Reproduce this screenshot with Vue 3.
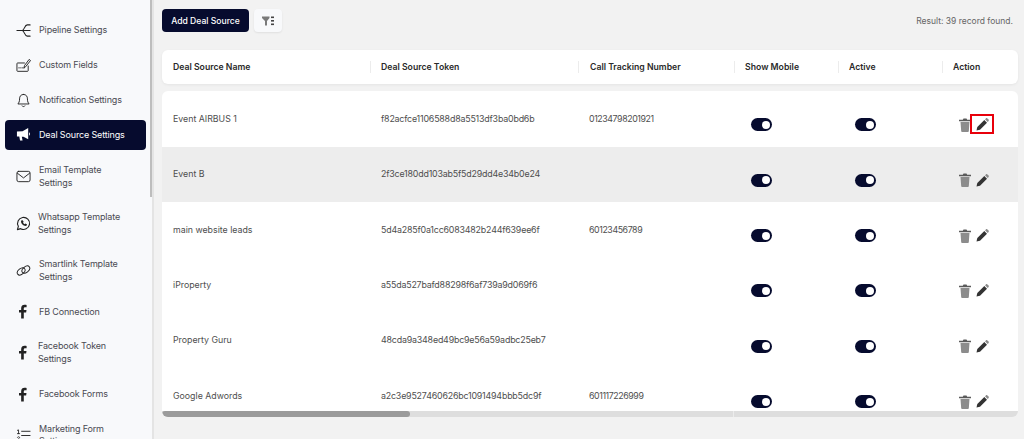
<script setup>
const menu = [
  { id: 'pipe', label: ['Pipeline Settings'] },
  { id: 'card', label: ['Custom Fields'] },
  { id: 'bell', label: ['Notification Settings'] },
  { id: 'mega', label: ['Deal Source Settings'], active: true },
  { id: 'mail', label: ['Email Template', 'Settings'] },
  { id: 'wa', label: ['Whatsapp Template', 'Settings'] },
  { id: 'link', label: ['Smartlink Template', 'Settings'] },
  { id: 'fb', label: ['FB Connection'] },
  { id: 'fb', label: ['Facebook Token', 'Settings'] },
  { id: 'fb', label: ['Facebook Forms'] },
  { id: 'list', label: ['Marketing Form', 'Settings'] }
]
const cols = ['Deal Source Name', 'Deal Source Token', 'Call Tracking Number', 'Show Mobile', 'Active', 'Action']
const rows = [
  { name: 'Event AIRBUS 1', token: 'f82acfce1106588d8a5513df3ba0bd6b', phone: '01234798201921', marked: true },
  { name: 'Event B', token: '2f3ce180dd103ab5f5d29dd4e34b0e24', phone: '', shaded: true },
  { name: 'main website leads', token: '5d4a285f0a1cc6083482b244f639ee6f', phone: '60123456789' },
  { name: 'iProperty', token: 'a55da527bafd88298f6af739a9d069f6', phone: '' },
  { name: 'Property Guru', token: '48cda9a348ed49bc9e56a59adbc25eb7', phone: '' },
  { name: 'Google Adwords', token: 'a2c3e9527460626bc1091494bbb5dc9f', phone: '601117226999' }
]
</script>

<template>
  <div class="page">
    <aside class="side">
      <nav class="menu">
        <a v-for="(m, i) in menu" :key="i" class="item" :class="{ active: m.active, tall: m.label.length > 1 }">
          <svg class="ico" viewBox="0 0 16 16" fill="none" stroke="currentColor" stroke-width="1" stroke-linecap="round" stroke-linejoin="round">
            <template v-if="m.id === 'pipe'">
              <path stroke-width="1.200" d="M1 8h5.500M6.500 8c2.500 0 2.500-6 5.500-6h3M6.500 8h8.500M6.500 8c2.500 0 2.500 6 5.500 6h3" />
            </template>
            <template v-else-if="m.id === 'card'">
              <path d="M13 8.500v5c0 .4-.3.7-.7.7H1.700c-.4 0-.7-.3-.7-.7V6c0-.4.3-.7.700-.7H9" />
              <path d="M8.500 10.500l.6-2.500L14 1.500l1.500 1.200-5 6.300z" />
              <path d="M3 10.500h.5M5 10.500h.5M7 10.500h.5" />
            </template>
            <template v-else-if="m.id === 'bell'">
              <path d="M8 1.500c-3 0-4.200 2.200-4.200 4.800 0 3-.8 4.200-1.800 5.400h12c-1-1.200-1.800-2.400-1.800-5.400 0-2.600-1.200-4.800-4.200-4.800z" />
              <path d="M6.500 13.800c.4 1 2.600 1 3 0" />
            </template>
            <template v-else-if="m.id === 'mega'">
              <path fill="currentColor" stroke="none" d="M1 4.800l6-.3 6-3.500v12L8 10.300l-1.800 0 .8 4.200H4.300L3.500 10H1zM14 5.500c1.400.6 1.400 3.200 0 3.800z" />
            </template>
            <template v-else-if="m.id === 'mail'">
              <rect x="1" y="2.500" width="14" height="11" rx="1.800" />
              <path d="M1.500 4.500l6.500 5 6.500-5" />
            </template>
            <template v-else-if="m.id === 'wa'">
              <path stroke-width="1.200" d="M1.500 14.500l1-3.500a6.400 6.400 0 1 1 2.500 2.500z" />
              <path fill="currentColor" stroke="none" d="M5.500 4.800c-.9 2.900 2.600 6.400 5.700 5.700l.6-1.500-1.900-1-.7.800c-.8-.4-1.400-1-1.800-1.800l.8-.7-1-1.900z" />
            </template>
            <template v-else-if="m.id === 'link'">
              <ellipse cx="5.500" cy="9" rx="4.700" ry="3" transform="rotate(-38 5.500 9)" />
              <ellipse cx="10.500" cy="7" rx="4.700" ry="3" transform="rotate(-38 10.500 7)" />
            </template>
            <template v-else-if="m.id === 'fb'">
              <path fill="currentColor" stroke="none" d="M5.500 15.500V9H3.200V6.300h2.300V4.500C5.500 2 7 .8 9.100.8c1 0 1.900.1 2.200.2v2.400H9.800c-1.200 0-1.500.6-1.500 1.400v1.500h2.900L10.800 9H8.300v6.500z" />
            </template>
            <template v-else>
              <path d="M6 3.500h9M6 8h9M6 12.500h9" />
              <path d="M1.500 2.500L2.700 2v4M1.500 6h2.400M1.500 10c.3-1 2.300-1 2.300.2 0 1-2.300 1.800-2.300 3h2.400" stroke-width=".9" />
            </template>
          </svg>
          <span class="label" :class="{ shift: m.label[0].startsWith('Whatsapp') || m.label[0] === 'Facebook Token' }">
            <span v-for="l in m.label" :key="l" class="line">{{ l }}</span>
          </span>
        </a>
      </nav>
      <div class="side-thumb"></div>
    </aside>

    <main class="main">
      <div class="toolbar">
        <div class="tools">
          <button class="add">Add Deal Source</button>
          <button class="filter">
            <svg viewBox="0 0 12 10" width="12" height="10">
              <path fill="#7a7a7a" d="M0 .5h7.500v1.500L5 5v4.500H3V5L0 2z" />
              <rect x="9" y=".5" width="3" height="1.600" fill="#444" />
              <rect x="9" y="4" width="3" height="1.600" fill="#444" />
              <rect x="9" y="7.500" width="3" height="1.600" fill="#444" />
            </svg>
          </button>
        </div>
        <span class="result">Result: 39 record found.</span>
      </div>

      <div class="thead grid">
        <div v-for="(c, i) in cols" :key="c" class="th" :class="{ first: i === 0 }"><span>{{ c }}</span></div>
      </div>

      <div class="tbody">
        <div v-for="r in rows" :key="r.name" class="row grid" :class="{ shaded: r.shaded }">
          <div class="td name">{{ r.name }}</div>
          <div class="td token">{{ r.token }}</div>
          <div class="td phone">{{ r.phone }}</div>
          <div class="td ctl"><span class="toggle"></span></div>
          <div class="td ctl"><span class="toggle"></span></div>
          <div class="td act">
            <svg class="trash" viewBox="0 0 12 14" width="12" height="14">
              <path fill="#8c8c8c" d="M1.500 4h9l-.7 9.200c0 .5-.4.800-.9.800H3.100c-.5 0-.9-.3-.9-.8z" />
              <path fill="#5a5a5a" d="M0 1.800h3.800L4.500.6h3l.7 1.200H12v1.400H0z" />
            </svg>
            <span class="edit" :class="{ marked: r.marked }">
              <svg viewBox="0 0 13 13" width="13" height="13">
                <path fill="#333" d="M8.300 2L11 4.700 4 11.700l-3.500.8.800-3.500z" />
                <path fill="#8a8a8a" d="M9 1.300l.9-.9c.5-.4 1-.4 1.500 0l1.200 1.200c.4.500.4 1 0 1.500l-.9.900z" />
              </svg>
            </span>
          </div>
        </div>
      </div>

      <div class="hbar"><div class="hthumb"></div></div>
    </main>
  </div>
</template>

<style>
html, body { margin: 0; background: #f2f2f2; overflow: hidden; }
</style>

<style scoped>
.page {
  display: flex;
  width: 1024px;
  height: 439px;
  overflow: hidden;
  font-family: Inter, "Noto Sans", sans-serif;
  color: #4a4a4a;
  background: #f2f2f2;
}
.side {
  position: relative;
  flex: 0 0 152px;
  height: 439px;
  overflow: hidden;
  background: #f8f9fb;
  border-right: 2px solid #e4e4e4;
}
.side-thumb {
  position: absolute;
  top: 0;
  right: 0;
  width: 2px;
  height: 197px;
  background: #bdbdbd;
}
.menu {
  display: flex;
  flex-direction: column;
  gap: 5.3px;
  padding: 15px 6px 0 5px;
}
.item {
  display: flex;
  align-items: center;
  flex: none;
  height: 30px;
  padding-left: 11px;
  border-radius: 4px;
  color: #222;
  box-sizing: border-box;
}
.item.tall { height: 41.6px; }
.item.active {
  margin-top: -1px;
  margin-bottom: 1px;
  background: #060b2e;
  color: #fff;
}
.ico {
  flex: none;
  width: 15px;
  height: 15px;
}
.label {
  display: flex;
  flex-direction: column;
  margin-left: 8px;
  font-size: 9px;
  line-height: 12.5px;
  letter-spacing: -.15px;
  color: #4a4a52;
}
.label.shift { margin-left: 7px; }
.item.active .label { color: #fff; }
.line { white-space: nowrap; }

.main {
  flex: 1;
  min-width: 0;
  padding: 9px 6px 0 8px;
}
.toolbar {
  display: flex;
  align-items: center;
  justify-content: space-between;
  height: 23px;
  padding-right: 5px;
}
.tools {
  display: flex;
  align-items: center;
  gap: 5px;
}
button {
  font: inherit;
  border: 0;
  padding: 0;
}
.add {
  width: 87px;
  height: 23px;
  background: #060b2e;
  color: #fff;
  border-radius: 4px;
  font-size: 8.6px;
  font-weight: 500;
}
.filter {
  display: flex;
  align-items: center;
  justify-content: center;
  width: 28px;
  height: 23px;
  background: #f8f9fb;
  border-radius: 4px;
  box-shadow: 0 1px 2px rgba(0,0,0,.08);
}
.result {
  font-size: 8.5px;
  color: #666;
}
.grid {
  display: grid;
  grid-template-columns: 208px 208px 156px 104px 104px 76px;
}
.thead {
  margin-top: 18px;
  height: 34px;
  align-items: center;
  background: #fff;
  border-radius: 6px;
  box-shadow: 0 1px 3px rgba(0,0,0,.06);
}
.th {
  display: flex;
  align-items: center;
  height: 12px;
  padding-left: 10px;
  border-left: 1px solid #ececec;
  font-size: 8.7px;
  font-weight: 600;
  color: #2a2a2a;
  white-space: nowrap;
}
.th.first { border-left: 0; padding-left: 11px; }
.th:nth-child(3) { padding-left: 11px; }
.tbody {
  margin-top: 7px;
  height: 320px;
  overflow: hidden;
  background: #fff;
  border-radius: 6px 6px 0 0;
}
.row {
  height: 55.4px;
}
.row:first-child { height: 56px; }
.row.shaded { background: #ededed; }
.td {
  display: flex;
  align-items: center;
  padding-left: 11px;
  padding-bottom: 2px;
  font-size: 8.8px;
  color: #4e4e4e;
  white-space: nowrap;
}
.token { font-size: 8.9px; letter-spacing: -.2px; }
.phone { font-size: 8.8px; letter-spacing: -.4px; }
.ctl {
  padding: 11px 0 0 17px;
}
.toggle {
  position: relative;
  display: block;
  width: 21px;
  height: 13px;
  border-radius: 6.5px;
  background: #060b2e;
}
.toggle::after {
  content: "";
  position: absolute;
  top: 2.5px;
  right: 2px;
  width: 8px;
  height: 8px;
  border-radius: 50%;
  background: #fff;
}
.act {
  padding: 11px 0 0 17px;
  gap: 5px;
}
.edit {
  position: relative;
  display: flex;
}
.edit.marked::after {
  content: "";
  position: absolute;
  top: -4px;
  left: -6px;
  width: 20px;
  height: 16px;
  border: 2px solid #e8000b;
}
.hbar {
  position: relative;
  height: 6px;
  background: #dedede;
  border-radius: 0 0 6px 6px;
  overflow: hidden;
}
.hbar::after {
  content: "";
  position: absolute;
  top: 0;
  left: 571px;
  width: 1px;
  height: 6px;
  background: #ececec;
}
.hthumb {
  width: 248px;
  height: 6px;
  background: #9b9b9b;
  border-radius: 3px;
}
</style>
